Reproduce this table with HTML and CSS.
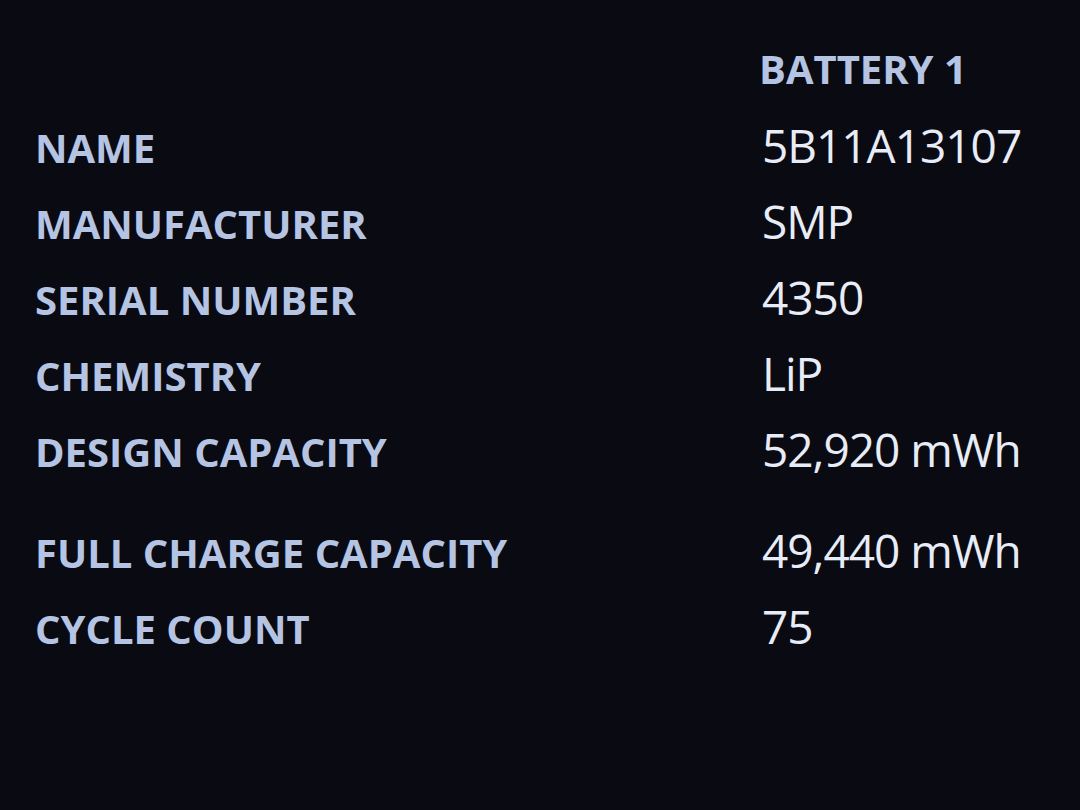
FILE: index.html
```html
<!DOCTYPE html>
<html>
<head>
<meta charset="utf-8">
<link rel="stylesheet" href="styles.css">
</head>
<body>
<div class="report">
  <div class="row head"><span class="label"></span><span class="title">BATTERY 1</span></div>
  <div class="row"><span class="label">NAME</span><span class="value">5B11A13107</span></div>
  <div class="row"><span class="label">MANUFACTURER</span><span class="value">SMP</span></div>
  <div class="row"><span class="label">SERIAL NUMBER</span><span class="value">4350</span></div>
  <div class="row"><span class="label">CHEMISTRY</span><span class="value">LiP</span></div>
  <div class="row"><span class="label">DESIGN CAPACITY</span><span class="value">52,920 mWh</span></div>
  <div class="row gap"><span class="label">FULL CHARGE CAPACITY</span><span class="value">49,440 mWh</span></div>
  <div class="row"><span class="label">CYCLE COUNT</span><span class="value">75</span></div>
</div>
</body>
</html>
```
FILE: styles.css
```css
html, body {
  margin: 0;
  height: 100%;
  background: #090a12;
}
body {
  font-family: "Open Sans", "Noto Sans", sans-serif;
}
.report {
  padding: 31px 0 0 35px;
  display: flex;
  flex-direction: column;
}
.row {
  display: grid;
  grid-template-columns: 727px 1fr;
  align-items: baseline;
  height: 76px;
  line-height: 76px;
}
.row.gap {
  margin-top: 25px;
}
.label, .title {
  font-size: 40px;
  font-weight: 700;
  color: #b5c4e2;
  white-space: nowrap;
}
.title {
  margin-left: -3px;
}
.value {
  font-size: 46px;
  font-weight: 400;
  letter-spacing: -1px;
  color: #e8ecf6;
  white-space: nowrap;
}
```
